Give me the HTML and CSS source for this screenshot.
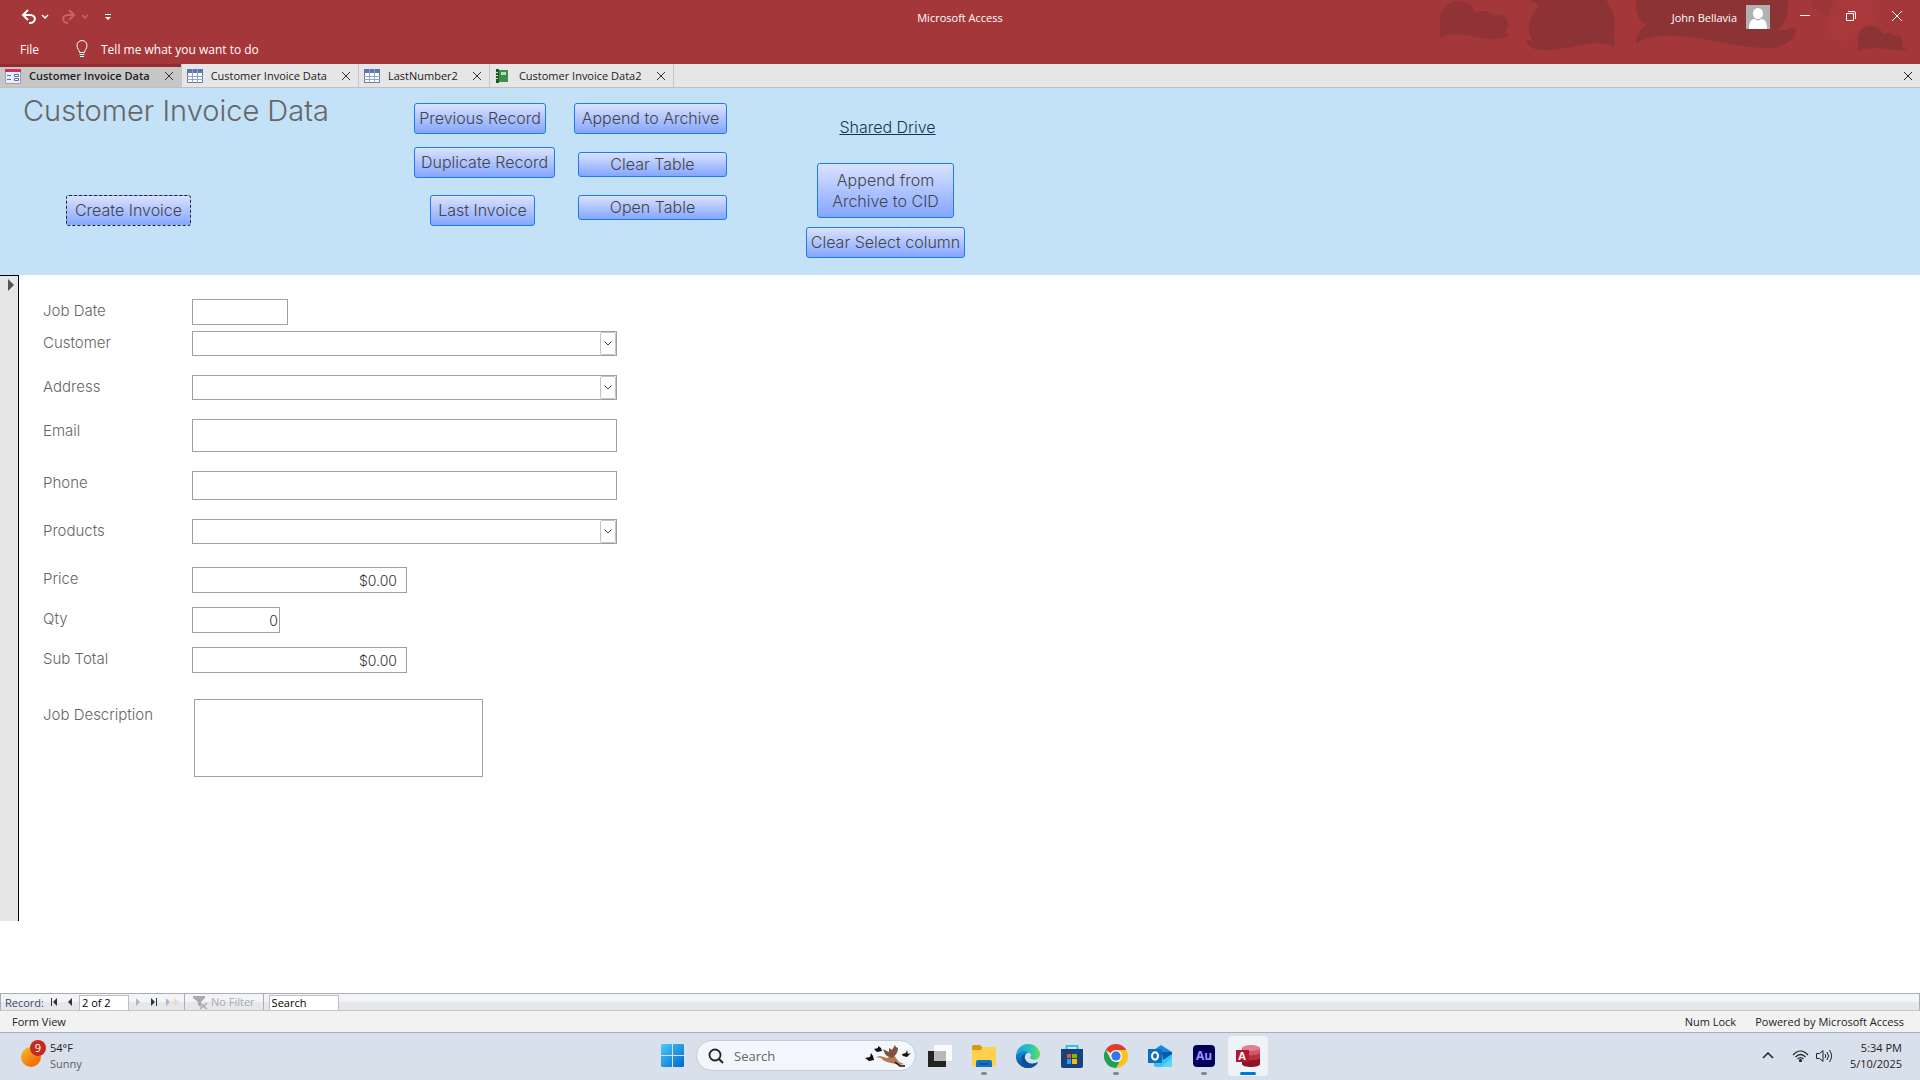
FILE: index.html
```html
<!DOCTYPE html>
<html lang="en">
<head>
    <meta charset="utf-8">
    <meta name="viewport" content="width=device-width, initial-scale=1.0">
    <title>Microsoft Access</title>
    <link rel="stylesheet" href="styles.css">
</head>
<body>
<header class="ribbon">
    <svg class="ribbon-art" width="520" height="64" viewBox="0 0 520 64" aria-hidden="true">
        <g fill="#8b3335">
            <path opacity=".75" d="M40 39V20C40 8 50 1 59 1c10 0 15 7 16 12 9-4 17-1 19 3 8-4 14 1 14 8 0 5-2 8-4 9l6 1c-3 4-15 7-29 4-13-3-32-7-41 1z"/>
            <path opacity=".85" d="M130 20c3-6 4-9 9-15l-9-5h76c8 9 11 24 8 37l1 11c-14-10-35-1-57 1-14 2-29 3-33-10l8 2c-5-7-5-14-3-21z"/>
            <path d="M236 0h152c1 14-3 26-12 30 10 2 14-3 19-2 4 10-10 20-30 20-41 0-100-25-129-4 0-10 4-15 11-19-9-4-12-15-11-25z"/>
            <path d="M458 51V38c0-7 6-12 13-12 6 0 10 4 12 8 6-2 10-1 12 2 7-2 9 7 7 12l5 1c-8 5-33-6-49 2z"/>
            <path opacity=".35" d="M412 0h23c0 8 7 9 12 7-2 6-8 9-12 6-6 6-16 2-18-4-4 0-6-5-5-9z"/>
        </g>
        <path fill="#b03a3d" opacity=".45" d="M434 0h44c4 10 1 25-9 25-14 0-12 25-35 15-10-4-8-27 0-40z"/>
    </svg>
    <div class="title-row">
        <div class="quick-access">
            <button class="icon-btn" aria-label="Undo">
                <svg width="30" height="16" viewBox="0 0 30 16" fill="none" stroke="#fff">
                    <path stroke-width="2" d="M8 1 3 6l5 5M3 6h7c7 0 6 8 0 8H9"/>
                    <path stroke-width="1.5" d="m22 6 3 3 3-3"/>
                </svg>
            </button>
            <button class="icon-btn faded" aria-label="Redo">
                <svg width="30" height="16" viewBox="0 0 30 16" fill="none" stroke="#d35f62">
                    <path stroke-width="2" d="m9 1 5 5-5 5M14 6H8c-7 0-6 8 0 8"/>
                    <path stroke-width="1.5" d="m22 6 3 3 3-3"/>
                </svg>
            </button>
            <button class="icon-btn" aria-label="Customize Quick Access Toolbar">
                <svg width="8" height="8" viewBox="0 0 8 8" fill="#fff"><path d="M1 1h6v1H1zM1 4h6L4 7z"/></svg>
            </button>
        </div>
        <div class="app-name">Microsoft Access</div>
        <div class="window-side">
            <span class="user-name">John Bellavia</span>
            <svg class="avatar" width="24" height="24" viewBox="0 0 24 24" aria-hidden="true">
                <path fill="#b1b1b1" d="M0 0h24v24H0z"/>
                <ellipse cx="12" cy="8.500" rx="5" ry="5.500" fill="#fff"/>
                <path fill="#fff" d="M3 24c0-7 2-10 6-10 2 2 4 2 6 0 4 0 6 3 6 10z"/>
            </svg>
            <button class="window-btn" aria-label="Minimize">
                <svg width="12" height="12" viewBox="0 0 12 12" stroke="#fff"><path d="M1 5.500h10"/></svg>
            </button>
            <button class="window-btn" aria-label="Restore">
                <svg width="12" height="12" viewBox="0 0 12 12" fill="none" stroke="#fff"><path d="M1.500 3.500h7v7h-7zM3 1.500h6q1.500 0 1.500 1.500v6"/></svg>
            </button>
            <button class="window-btn" aria-label="Close">
                <svg width="12" height="12" viewBox="0 0 12 12" stroke="#fff"><path d="m1 1 10 10M11 1 1 11"/></svg>
            </button>
        </div>
    </div>
    <div class="menu-row">
        <button class="menu-btn">File</button>
        <button class="menu-btn tell-me">
            <svg width="12" height="18" viewBox="0 0 12 18" fill="none" stroke="#fff">
                <path d="M3.500 12.500C3.500 10 1 9 1 5.500a5 5 0 0 1 10 0C11 9 8.500 10 8.500 12.500zM3.500 14.500h5M4 16.500h4"/>
            </svg>
            Tell me what you want to do
        </button>
    </div>
</header>

<nav class="tabs">
    <div class="tab active">
        <svg width="16" height="16" viewBox="0 0 16 16" aria-hidden="true">
            <path fill="#e8edf6" stroke="#97a3bd" d="M.5 3.500h15v12H.5z"/>
            <path fill="#c8335f" d="M0 1h16v3H0z"/>
            <path stroke="#5b6f98" fill="#fff" d="M2 7.500h4M2 11.500h4M9.500 6.500h4v2h-4zM9.500 10.500h4v2h-4z"/>
        </svg>
        <button class="tab-name">Customer Invoice Data</button>
        <button class="tab-close" aria-label="Close Customer Invoice Data form"><svg width="10" height="10" viewBox="0 0 10 10" stroke="#333"><path d="m1 1 8 8M9 1 1 9"/></svg></button>
    </div>
    <div class="tab">
        <svg width="16" height="14" viewBox="0 0 16 14" aria-hidden="true">
            <path fill="#fff" stroke="#6379a8" d="M.5.500h15v13H.5z"/>
            <path fill="#5b78b4" d="M0 0h16v4H0z"/>
            <path stroke="#8fa3c8" d="M0 7.500h16M0 10.500h16M5.500 0v14M10.500 0v14"/>
        </svg>
        <button class="tab-name">Customer Invoice Data</button>
        <button class="tab-close" aria-label="Close Customer Invoice Data table"><svg width="10" height="10" viewBox="0 0 10 10" stroke="#333"><path d="m1 1 8 8M9 1 1 9"/></svg></button>
    </div>
    <div class="tab">
        <svg width="16" height="14" viewBox="0 0 16 14" aria-hidden="true">
            <path fill="#fff" stroke="#6379a8" d="M.5.500h15v13H.5z"/>
            <path fill="#5b78b4" d="M0 0h16v4H0z"/>
            <path stroke="#8fa3c8" d="M0 7.500h16M0 10.500h16M5.500 0v14M10.500 0v14"/>
        </svg>
        <button class="tab-name">LastNumber2</button>
        <button class="tab-close" aria-label="Close LastNumber2"><svg width="10" height="10" viewBox="0 0 10 10" stroke="#333"><path d="m1 1 8 8M9 1 1 9"/></svg></button>
    </div>
    <div class="tab">
        <svg width="16" height="14" viewBox="0 0 16 14" aria-hidden="true">
            <path fill="#3f8f4a" d="M1 1h12v12H1z"/>
            <path fill="#1f5a2a" d="M1 0h3v14H1z"/>
            <path fill="#b9dfb4" d="M6 3h5v3H6z"/>
            <path stroke="#cfd8cf" d="M0 3.500h3M0 6.500h3M0 9.500h3"/>
        </svg>
        <button class="tab-name">Customer Invoice Data2</button>
        <button class="tab-close" aria-label="Close Customer Invoice Data2"><svg width="10" height="10" viewBox="0 0 10 10" stroke="#333"><path d="m1 1 8 8M9 1 1 9"/></svg></button>
    </div>
    <button class="tab-close close-all" aria-label="Close document"><svg width="10" height="10" viewBox="0 0 10 10" stroke="#222"><path d="m1 1 8 8M9 1 1 9"/></svg></button>
</nav>

<main class="document">
    <section class="form-header">
        <div class="col col-title">
            <h1>Customer Invoice Data</h1>
            <button class="cmd focused">Create Invoice</button>
        </div>
        <div class="col col-record">
            <button class="cmd previous">Previous Record</button>
            <button class="cmd duplicate">Duplicate Record</button>
            <button class="cmd last-invoice">Last Invoice</button>
        </div>
        <div class="col col-table">
            <button class="cmd">Append to Archive</button>
            <button class="cmd short">Clear Table</button>
            <button class="cmd short">Open Table</button>
        </div>
        <div class="col col-archive">
            <a href="#">Shared Drive</a>
            <button class="cmd tall">Append from<br>Archive to CID</button>
            <button class="cmd clear-select">Clear Select column</button>
        </div>
    </section>

    <section class="detail">
        <div class="record-selector">
            <svg width="6" height="12" viewBox="0 0 6 12" fill="#555" aria-hidden="true"><path d="M0 0v12l6-6z"/></svg>
        </div>
        <form class="fields">
            <div class="field tight">
                <label for="job-date">Job Date</label>
                <input class="box date" type="text" id="job-date">
            </div>
            <div class="field">
                <label for="customer">Customer</label>
                <div class="combo">
                    <select id="customer"><option></option></select>
                    <svg width="8" height="5" viewBox="0 0 8 5" fill="none" stroke="#444"><path d="m.5.500 3.500 3.500L7.500.500"/></svg>
                </div>
            </div>
            <div class="field">
                <label for="address">Address</label>
                <div class="combo">
                    <select id="address"><option></option></select>
                    <svg width="8" height="5" viewBox="0 0 8 5" fill="none" stroke="#444"><path d="m.5.500 3.500 3.500L7.500.500"/></svg>
                </div>
            </div>
            <div class="field">
                <label for="email">Email</label>
                <input class="box email" type="text" id="email">
            </div>
            <div class="field">
                <label for="phone">Phone</label>
                <input class="box phone" type="text" id="phone">
            </div>
            <div class="field wide-gap">
                <label for="products">Products</label>
                <div class="combo">
                    <select id="products"><option></option></select>
                    <svg width="8" height="5" viewBox="0 0 8 5" fill="none" stroke="#444"><path d="m.5.500 3.500 3.500L7.500.500"/></svg>
                </div>
            </div>
            <div class="field close-gap">
                <label for="price">Price</label>
                <input class="box money" type="text" id="price" value="$0.00">
            </div>
            <div class="field close-gap">
                <label for="qty">Qty</label>
                <input class="box qty" type="text" id="qty" value="0">
            </div>
            <div class="field wide-gap">
                <label for="sub-total">Sub Total</label>
                <input class="box money" type="text" id="sub-total" value="$0.00">
            </div>
            <div class="field description">
                <label for="job-description">Job Description</label>
                <textarea class="box" id="job-description"></textarea>
            </div>
        </form>
    </section>
</main>

<div class="record-bar">
    <label for="record-number">Record:</label>
    <div class="nav-group">
        <button class="icon-btn" aria-label="First record"><svg width="8" height="8" viewBox="0 0 8 8" fill="#333"><path d="M1 0h1v8H1zM7 0v8L3 4z"/></svg></button>
        <button class="icon-btn" aria-label="Previous record"><svg width="8" height="8" viewBox="0 0 8 8" fill="#333"><path d="M6 0v8L2 4z"/></svg></button>
    </div>
    <input class="record-number" type="text" id="record-number" value="2 of 2">
    <div class="nav-group">
        <button class="icon-btn" aria-label="Next record"><svg width="8" height="8" viewBox="0 0 8 8" fill="#b5b5ba"><path d="M2 0v8l4-4z"/></svg></button>
        <button class="icon-btn" aria-label="Last record"><svg width="8" height="8" viewBox="0 0 8 8" fill="#333"><path d="M6 0h1v8H6zM1 0v8l4-4z"/></svg></button>
        <button class="icon-btn" aria-label="New record"><svg width="13" height="8" viewBox="0 0 13 8" fill="#b5b5ba"><path d="M0 0v8l4-4z"/><path stroke="#ecd9b4" d="M9.500 0v8M5.500 4h8M7 1.500l5 5M12 1.500l-5 5"/></svg></button>
    </div>
    <button class="filter">
        <svg width="16" height="15" viewBox="0 0 16 15"><path fill="#a9a9ae" d="M0 1h12v2L8 7v5l-3-2V7L0 3z"/><path fill="none" stroke="#a9a9ae" stroke-width="1.500" d="m7 8 7 6M14 8l-7 6"/></svg>
        No Filter
    </button>
    <input class="record-search" type="text" value="Search" aria-label="Search records">
</div>

<footer class="status-bar">
    <span>Form View</span>
    <span class="num-lock">Num Lock</span>
    <span>Powered by Microsoft Access</span>
</footer>

<div class="taskbar">
    <button class="weather">
        <svg width="26" height="28" viewBox="0 0 26 28">
            <defs><linearGradient id="sun" x2="1" y2="1"><stop offset="0" stop-color="#f2c230"/><stop offset=".7" stop-color="#f4720b"/></linearGradient></defs>
            <circle cx="11" cy="17" r="10" fill="url(#sun)"/>
            <circle cx="18" cy="8" r="8" fill="#c42b1c"/>
            <text class="badge-text" x="18" y="12" text-anchor="middle">9</text>
        </svg>
        <span>54°F<br><span class="muted">Sunny</span></span>
    </button>
    <div class="apps">
        <button class="app" aria-label="Start">
            <svg width="23" height="23" viewBox="0 0 23 23">
                <defs><linearGradient id="win" x2="1" y2="1"><stop offset="0" stop-color="#4ccaff"/><stop offset="1" stop-color="#0067c8"/></linearGradient></defs>
                <path fill="url(#win)" d="M1 0h10v11H0V1zM12 0h10l1 1v10H12zM0 12h11v11H1l-1-1zM12 12h11v10l-1 1H12z"/>
            </svg>
        </button>
        <label class="task-search">
            <svg width="16" height="16" viewBox="0 0 16 16" fill="none" stroke="#222"><circle cx="7" cy="7" r="5.500" stroke-width="1.800"/><path stroke-width="2" d="m11 11 4 4"/></svg>
            <input type="text" placeholder="Search" aria-label="Search">
            <svg width="46" height="24" viewBox="0 0 46 24">
                <path fill="#111" d="m0 14 5-1 1-4 2 3 1 4-5 1zM9 5l4-1V2l3 2 1 3-5 1zM37 10l4-1 1-3 1 4 3-1-4 4-4-1z"/>
                <path fill="#b77a55" d="m11 13 4-1 7 2 6-4 6 8 5 2-4 1-9-2c-6-1-8-3-10-5z"/>
                <path fill="#7d5340" d="m20 10-2-5 6 3V4l3 2 3-5 1 2 2 1c0 5-3 8-6 10l-5-2z"/>
                <path stroke="#111" stroke-width="1.500" fill="none" d="m30 18 5 4h5"/>
            </svg>
        </label>
        <button class="app" aria-label="Task View">
            <svg width="24" height="22" viewBox="0 0 24 22">
                <path fill="#232323" d="M0 6h18v16H0z"/><path fill="#fff" opacity=".85" d="M6 0h18v16H6z"/><path fill="#aaa" opacity=".7" d="M6 6h12v10H6z"/>
            </svg>
        </button>
        <button class="app running" aria-label="File Explorer">
            <svg width="24" height="22" viewBox="0 0 24 22">
                <path fill="#d9980d" d="M0 2q0-2 2-2h6l3 3v3H0z"/><path fill="#ffd04a" d="M0 5h9l2-3h12l1 1v18H1l-1-1z"/><path fill="#1273c4" d="M4 22v-5q0-2 2-2h12q2 0 2 2v5z"/><path fill="#0a54a0" d="M7 18h10v2H7z"/>
            </svg>
        </button>
        <button class="app" aria-label="Edge">
            <svg width="24" height="24" viewBox="0 0 24 24">
                <defs>
                    <linearGradient id="edge-top" x2="1"><stop offset="0" stop-color="#199ee0"/><stop offset=".6" stop-color="#2ac5b9"/><stop offset="1" stop-color="#67de53"/></linearGradient>
                    <linearGradient id="edge-low" y2="1" x2="0"><stop offset="0" stop-color="#1590de"/><stop offset="1" stop-color="#114a8b"/></linearGradient>
                </defs>
                <path fill="url(#edge-top)" d="M0 11C1 4 6 0 12 0c7 0 12 5 12 10s-5 7-9 5c-2-1 0-2 0-4-1-3-5-4-8-4-4 0-6 2-7 4z"/>
                <path fill="url(#edge-low)" d="M0 11c2-4 9-6 13-2-4 0-5 3-4 6 2 5 8 6 13 3-2 4-6 6-10 6C4 24-1 17 0 11z"/>
                <path fill="#0e4f9c" d="M6 12c-2 6 1 11 6 12 4 0 8-2 10-6-5 3-11 2-13-3-1-2 0-4 1-5-2 0-3 1-4 2z"/>
            </svg>
        </button>
        <button class="app" aria-label="Microsoft Store">
            <svg width="24" height="24" viewBox="0 0 24 24">
                <path fill="none" stroke="#35bdf3" stroke-width="2" d="M6.500 6V2h11v4"/><path fill="#17427e" d="M1 5h22v17q0 2-2 2H3q-2 0-2-2z"/>
                <path fill="#f25022" d="M7 10h4v4H7z"/><path fill="#7fba00" d="M12 10h5v4h-5z"/><path fill="#18a8ef" d="M7 15h4v5H7z"/><path fill="#ffb900" d="M12 15h5v5h-5z"/>
            </svg>
        </button>
        <button class="app running" aria-label="Chrome">
            <svg width="24" height="24" viewBox="0 0 24 24">
                <path fill="#e33b2e" d="M12 12 1.600 6a12 12 0 0 1 20.800 0z"/><path fill="#fcc31e" d="M12 6h10.400A12 12 0 0 1 12 24l5.200-9z"/><path fill="#20a04c" d="M1.600 6 6.800 15l5.200 3h3.500L12 24A12 12 0 0 1 1.600 6z"/>
                <circle cx="12" cy="12" r="6" fill="#fff"/><circle cx="12" cy="12" r="4.700" fill="#3578e5"/>
            </svg>
        </button>
        <button class="app" aria-label="Outlook">
            <svg width="24" height="22" viewBox="0 0 24 22">
                <path fill="#1a8ad6" d="M3 7 13 0l11 7v6H3z"/><path fill="#33c3f4" d="M6 12 24 8v12q0 2-2 2H8q-2 0-2-2z"/><path fill="#0d57a8" d="M14 7h10v2l-9 6z"/><path fill="#5ed4fa" d="m13 22 11-9v7q0 2-2 2z"/>
                <path fill="#0f6cc0" d="M0 4h14v14H0z"/><ellipse cx="7" cy="11" rx="3" ry="3.700" fill="none" stroke="#fff" stroke-width="2"/>
            </svg>
        </button>
        <button class="app running" aria-label="Audition">
            <svg width="22" height="22" viewBox="0 0 22 22"><rect width="22" height="22" rx="4" fill="#00005b"/><text class="au-text" x="11" y="15" text-anchor="middle">Au</text></svg>
        </button>
        <button class="app current" aria-label="Access">
            <svg width="24" height="22" viewBox="0 0 24 22">
                <path fill="#8f1426" d="M6 3h18v16c0 4-18 4-18 0z"/><path fill="#ba2f42" d="M6 3h18v10c-2 3-16 3-18 0z"/><path fill="#d1566a" d="M6 3h18v5c-2 3-16 3-18 0z"/><ellipse cx="15" cy="3" rx="9" ry="3" fill="#e08090"/>
                <path fill="#ad1a30" d="M0 5h13v12H0z"/><text class="access-text" x="6" y="15" text-anchor="middle">A</text>
            </svg>
        </button>
    </div>
    <div class="tray">
        <button class="icon-btn" aria-label="Show hidden icons"><svg width="12" height="7" viewBox="0 0 12 7" fill="none" stroke="#222" stroke-width="1.500"><path d="m1 6 5-5 5 5"/></svg></button>
        <button class="icon-btn sound" aria-label="Network and volume">
            <svg width="17" height="12" viewBox="0 0 17 12" fill="none" stroke="#222" stroke-width="1.200"><path d="M1 5q7.500-8 15 0M3.500 7q5-5 10 0M5.500 9.200q3-3 6 0"/><circle cx="8.500" cy="10.500" r="1" fill="#222"/></svg>
            <svg width="17" height="14" viewBox="0 0 17 14" fill="none" stroke="#222"><path d="M.5 4.500h3L7 1.500v11l-3.500-3h-3zM9 5q1.500 2 0 4M11 3q3 4 0 8M13.500 1q4 6 0 12"/></svg>
        </button>
        <div class="clock">5:34 PM<br>5/10/2025</div>
    </div>
</div>
</body>
</html>
```
FILE: styles.css
```css
/* Base */
* {
    box-sizing: border-box;
}
body {
    margin: 0;
    min-height: 100vh;
    display: flex;
    flex-direction: column;
    background: #fff;
    font-family: 'Open Sans', 'Noto Sans', sans-serif;
    font-size: 11px;
    color: #222;
}
button {
    font: inherit;
    color: inherit;
    background: none;
    border: none;
    padding: 0;
}
svg {
    display: block;
    flex: none;
}
/* Red title area */
.ribbon {
    position: relative;
    background: #a4373a;
    color: #fff;
}
.ribbon-art {
    position: absolute;
    top: 0;
    right: 0;
}
.title-row {
    position: relative;
    display: grid;
    grid-template-columns: 1fr auto 1fr;
    align-items: center;
    height: 34px;
}
.quick-access {
    display: flex;
    align-items: center;
    gap: 10px;
    padding-left: 20px;
}
.quick-access .icon-btn:last-child {
    margin-left: 4px;
}
.window-side {
    display: flex;
    align-items: center;
    justify-content: flex-end;
}
.avatar {
    margin: 0 12px 0 9px;
}
.window-btn {
    display: flex;
    justify-content: center;
    width: 46px;
    padding-bottom: 3px;
}
.menu-row {
    position: relative;
    display: flex;
    align-items: center;
    height: 30px;
    padding-left: 20px;
    font-size: 12px;
}
.tell-me {
    display: flex;
    align-items: center;
    gap: 13px;
    margin-left: 37px;
}
/* Object tabs */
.tabs {
    display: flex;
    height: 24px;
    background: #e6e6e6;
    border-bottom: 1px solid #c0c0c0;
}
.tab {
    display: flex;
    align-items: center;
    padding: 0 5px;
    border-right: 1px solid #c6c6c6;
}
.tab.active {
    background: #c6c6c6;
    box-shadow: inset 0 3px #942b2f;
    font-weight: 600;
}
.tab-name {
    margin: 0 12px 0 8px;
}
.tab-close {
    padding: 2px;
}
.close-all {
    margin-left: auto;
    padding-right: 7px;
}
/* Form header */
.form-header {
    display: flex;
    padding: 15px 0 17px 23px;
    background: #c3e1f7;
    font-family: Inter, sans-serif;
    font-weight: 300;
    font-size: 16px;
    color: #444;
}
.col {
    display: flex;
    flex-direction: column;
    align-items: flex-start;
}
.col-title {
    width: 391px;
    justify-content: space-between;
    padding-bottom: 32px;
}
h1 {
    margin: -8px 0 0;
    font-size: 29px;
    line-height: 32px;
    font-weight: 300;
    color: #666;
}
.cmd {
    height: 31px;
    padding: 0;
    border: 1px solid #1b7cf0;
    border-radius: 3px;
    background: linear-gradient(#dae2ff, #84a6ff);
    line-height: 21px;
    white-space: nowrap;
}
.cmd.focused {
    width: 125px;
    margin-left: 43px;
    border: 1px dashed #223;
}
.cmd.short {
    height: 25px;
}
.cmd.tall {
    width: 137px;
    height: 55px;
}
.cmd.previous {
    width: 132px;
}
.cmd.duplicate {
    width: 141px;
}
.cmd.clear-select {
    width: 159px;
}
.col-record {
    width: 160px;
    gap: 13px;
}
.last-invoice {
    width: 105px;
    margin: 4px 0 0 16px;
}
.col-table {
    width: 153px;
    align-items: stretch;
    gap: 18px;
}
.col-table .short {
    margin-left: 4px;
}
.col-archive {
    margin-left: 79px;
    align-items: center;
    gap: 9px;
}
.col-archive a {
    margin: 14px 0 17px 4px;
    line-height: 20px;
    color: #10384f;
}
/* Detail section */
.document {
    flex: 1;
}
.detail {
    display: flex;
}
.record-selector {
    width: 19px;
    padding: 3px 0 0 8px;
    background: #e6e6e6;
    border-top: 1px solid #000;
    border-right: 1px solid #000;
}
.fields {
    padding: 24px 24px 144px;
    font-family: Inter, sans-serif;
    font-weight: 300;
    font-size: 15px;
}
.field {
    display: flex;
    align-items: flex-start;
    margin-bottom: 19px;
}
.field.tight {
    margin-bottom: 6px;
}
.field.close-gap {
    margin-bottom: 14px;
}
.field.wide-gap {
    margin-bottom: 23px;
}
.field label {
    width: 149px;
    line-height: 24px;
    color: #666;
}
.box,
.combo select {
    width: 425px;
    height: 26px;
    padding: 0 4px;
    border: 1px solid #a0a0a0;
    border-radius: 0;
    background: #fff;
    font: inherit;
    font-size: 14px;
    color: #333;
    outline: none;
}
.box.date {
    width: 96px;
}
.box.email {
    height: 33px;
}
.box.phone {
    height: 29px;
}
.box.money {
    width: 215px;
    padding-right: 9px;
    text-align: right;
}
.box.qty {
    width: 88px;
    padding-right: 1px;
    text-align: right;
}
.combo {
    display: grid;
    align-items: center;
}
.combo > * {
    grid-area: 1 / 1;
}
.combo select {
    height: 25px;
    appearance: none;
}
.combo svg {
    box-sizing: content-box;
    justify-self: end;
    margin-right: 1px;
    padding: 8px 3px;
    border: 1px solid #c4c4c4;
    border-radius: 2px;
    pointer-events: none;
}
.field.description {
    margin: 26px 0 0;
}
.field.wide-gap:has(+ .description) {
    margin-bottom: 0;
}
.description label {
    padding-top: 4px;
}
.description .box {
    width: 289px;
    height: 78px;
    margin-left: 2px;
    resize: none;
}
/* Record navigation */
.record-bar {
    display: flex;
    align-items: stretch;
    height: 18px;
    border: 1px solid #acacb4;
    border-bottom-color: #c4c6c6;
    background: linear-gradient(#f3f4f6 50%, #e5e7ea 50%);
    line-height: 18px;
}
.record-bar label {
    width: 44px;
    padding-left: 4px;
    color: #444b66;
}
.nav-group {
    display: flex;
    align-items: center;
    gap: 8px;
    padding: 0 5px;
}
.record-number,
.record-search {
    width: 50px;
    margin-top: 1px;
    padding: 0 2px;
    border: 1px solid #c0c0c0;
    border-bottom: none;
    background: #fff;
    font: inherit;
    color: #000;
}
.record-search {
    width: 70px;
    margin-left: 5px;
}
.filter {
    display: flex;
    align-items: center;
    gap: 2px;
    padding: 0 8px;
    border: solid #acacb4;
    border-width: 0 1px;
    color: #a9a9ae;
}
.status-bar {
    display: flex;
    align-items: center;
    height: 21px;
    padding: 0 16px 0 12px;
    background: #f2f2f2;
}
.num-lock {
    margin: 0 19px 0 auto;
}
/* Windows taskbar */
.taskbar {
    display: grid;
    grid-template-columns: 1fr auto 1fr;
    align-items: center;
    height: 48px;
    padding-bottom: 2px;
    border-top: 1px solid #a9afb9;
    background: #d8e0eb;
    line-height: 16px;
}
.weather {
    display: flex;
    gap: 4px;
    padding-left: 20px;
    text-align: left;
}
.muted {
    color: #5a5f66;
}
.badge-text {
    font-size: 11px;
    fill: #fff;
}
.apps {
    display: flex;
    align-items: center;
    gap: 4px;
}
.app {
    position: relative;
    display: flex;
    align-items: center;
    justify-content: center;
    width: 40px;
    height: 40px;
    border-radius: 4px;
}
.running::after,
.current::after {
    content: "";
    position: absolute;
    bottom: 1px;
    width: 6px;
    height: 3px;
    border-radius: 2px;
    background: #85898f;
}
.current {
    background: #eff3f8;
}
.current::after {
    width: 16px;
    background: #0078d4;
}
.task-search {
    display: flex;
    align-items: center;
    width: 220px;
    height: 31px;
    padding: 0 4px 0 11px;
    border: 1px solid #c3ccd6;
    border-radius: 16px;
    background: #f3f7fb;
}
.task-search input {
    flex: 1;
    min-width: 0;
    margin-left: 8px;
    border: none;
    background: none;
    font: inherit;
    font-size: 13px;
}
.task-search input::placeholder {
    color: #666;
}
.au-text {
    font-size: 12px;
    font-weight: bold;
    fill: #9999ff;
}
.access-text {
    font-size: 11px;
    font-weight: bold;
    fill: #fff;
}
.tray {
    display: flex;
    align-items: center;
    justify-content: flex-end;
    padding-right: 18px;
}
.sound {
    display: flex;
    align-items: center;
    gap: 7px;
    margin: 0 17px 0 18px;
}
.clock {
    text-align: right;
}
```
